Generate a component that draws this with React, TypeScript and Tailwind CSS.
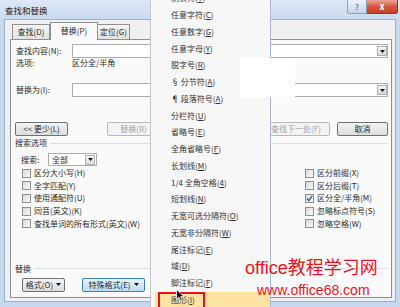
import React from "react";

function Tri() {
  return (
    <svg width="5" height="3" viewBox="0 0 5 3" className="shrink-0">
      <path d="M0 0h5L2.5 3z" fill="#111" />
    </svg>
  );
}

function Combo() {
  return (
    <div className="flex-1 h-[14px] bg-white border border-[#abadb3] flex items-center justify-end">
      <div className="w-[10px] h-[10px] border border-[#b0b0b0] bg-gradient-to-b from-[#f6f6f6] to-[#dadada] flex items-center justify-center">
        <Tri />
      </div>
    </div>
  );
}

function Btn({ label, w, disabled, ml }: { label: string; w: string; disabled?: boolean; ml?: string }) {
  return (
    <div
      className={`${w} ${ml ?? ""} h-[14px] rounded-[2px] border flex items-center justify-center whitespace-nowrap ${
        disabled
          ? "border-[#b5b9bc] bg-[#f4f4f4] text-[#a3a3a3]"
          : "border-[#707070] bg-gradient-to-b from-[#f4f4f4] to-[#dcdcdc] text-[#222]"
      }`}
    >
      {label}
    </div>
  );
}

function Check({ label, checked }: { label: string; checked?: boolean }) {
  return (
    <div className="h-[12.6px] flex items-center gap-[3px] whitespace-nowrap">
      <span className="w-[9px] h-[9px] border border-[#8e8f8f] bg-gradient-to-br from-[#d9d9d9] to-[#fbfbfb] flex items-center justify-center shrink-0">
        {checked && (
          <svg width="7" height="7" viewBox="0 0 7 7">
            <path d="M1 3.6 L2.9 5.6 L6.2 0.9" stroke="#2d5ea8" strokeWidth="1.4" fill="none" />
          </svg>
        )}
      </span>
      <span>{label}</span>
    </div>
  );
}

function Header({ label, mt }: { label: string; mt: string }) {
  return (
    <div className={`${mt} h-[10px] flex items-center pl-[4px] pr-[3px]`}>
      <span className="whitespace-nowrap">{label}</span>
      <div className="flex-1 ml-[3px] h-px bg-[#d5dfe5]" />
    </div>
  );
}

const menuItems: [string, string, string][] = [
  ["制表符(", "T", ")"],
  ["任意字符(", "C", ")"],
  ["任意数字(", "G", ")"],
  ["任意字母(", "Y", ")"],
  ["脱字号(", "R", ")"],
  ["§ 分节符(", "A", ")"],
  ["¶ 段落符号(", "A", ")"],
  ["分栏符(", "U", ")"],
  ["省略号(", "E", ")"],
  ["全角省略号(", "F", ")"],
  ["长划线(", "M", ")"],
  ["1/4 全角空格(", "4", ")"],
  ["短划线(", "N", ")"],
  ["无宽可选分隔符(", "O", ")"],
  ["无宽非分隔符(", "W", ")"],
  ["尾注标记(", "E", ")"],
  ["域(", "D", ")"],
  ["脚注标记(", "F", ")"],
  ["图形(", "I", ")"],
];

export default function App() {
  return (
    <div className="relative w-[400px] h-[307px] overflow-hidden bg-[#c6d8ee] font-['Noto_Sans_CJK_SC','Noto_Sans',sans-serif] text-[8px] leading-[10px] text-[#2a2a2a] flex flex-col">
      {/* title bar */}
      <div className="h-[19px] shrink-0 flex items-start bg-gradient-to-b from-[#dde8f6] to-[#c9dbf0]">
        <span className="ml-[5px] mt-[5px] text-[8.5px] text-[#1a1a1a]">查找和替换</span>
        <div className="ml-auto mr-[2px] flex">
          <div className="w-[20px] h-[14px] border border-[#8aa0bb] border-t-0 rounded-bl-[3px] bg-gradient-to-b from-[#eef3f9] to-[#c7d5e7] flex items-center justify-center text-[8px] text-[#3a4d66]">
            ?
          </div>
          <div className="w-[31px] h-[14px] border border-[#8a3a2c] border-t-0 border-l-0 rounded-br-[3px] bg-gradient-to-b from-[#eaa594] via-[#d7553f] to-[#c53f29] flex items-center justify-center text-white text-[9px] font-bold">
            x
          </div>
        </div>
      </div>

      {/* body */}
      <div className="flex-1 mx-[4px] mb-[5px] bg-[#f0f0f0] border border-[#9db2ca] flex flex-col">
        {/* tabs */}
        <div className="mt-[2px] ml-[7px] h-[17px] flex items-end">
          <div className="w-[38px] h-[15px] border border-[#8e8f8f] border-b-0 bg-gradient-to-b from-[#f5f5f5] to-[#e2e2e2] flex items-center justify-center">
            查找(D)
          </div>
          <div className="relative z-10 -mb-px w-[48px] h-[18px] border border-[#8e8f8f] border-b-0 bg-[#fafafa] flex items-center justify-center pb-[2px]">
            替换(P)
          </div>
          <div className="w-[32px] h-[15px] border border-[#8e8f8f] border-b-0 border-l-0 bg-gradient-to-b from-[#f5f5f5] to-[#e2e2e2] flex items-center justify-center">
            定位(G)
          </div>
        </div>

        {/* panel */}
        <div className="ml-[5px] mr-[3px] mb-[3px] flex-1 border border-[#8e8f8f] bg-[#fafafa] flex flex-col">
          <div className="mt-[4px] h-[14px] flex items-center pr-[3px]">
            <span className="w-[61px] pl-[5px] shrink-0 whitespace-nowrap">查找内容(N):</span>
            <Combo />
          </div>
          <div className="h-[10px] flex items-center">
            <span className="w-[61px] pl-[5px] shrink-0">选项:</span>
            <span>区分全/半角</span>
          </div>
          <div className="mt-[15px] h-[14px] flex items-center pr-[3px]">
            <span className="w-[61px] pl-[5px] shrink-0 whitespace-nowrap">替换为(I):</span>
            <Combo />
          </div>

          <div className="mt-[25px] h-[14px] flex items-center pl-[4px] pr-[3px]">
            <Btn label="<< 更少(L)" w="w-[53px]" />
            <Btn label="替换(R)" w="w-[53px]" ml="ml-[39px]" disabled />
            <div className="ml-auto flex">
              <Btn label="查找下一处(F)" w="w-[68px]" disabled />
              <Btn label="取消" w="w-[51px]" ml="ml-[7px]" />
            </div>
          </div>

          <Header label="搜索选项" mt="mt-[2px]" />

          <div className="mt-[5px] h-[13px] flex items-center pl-[10px]">
            <span className="w-[27px] shrink-0">搜索:</span>
            <div className="w-[49px] h-[13px] bg-white border border-[#abadb3] flex items-center justify-between pl-[3px]">
              <span>全部</span>
              <div className="w-[10px] h-[10px] mr-px border border-[#b0b0b0] bg-gradient-to-b from-[#f6f6f6] to-[#dadada] flex items-center justify-center">
                <Tri />
              </div>
            </div>
          </div>

          <div className="mt-[1px] flex">
            <div className="pl-[11px] flex flex-col">
              <Check label="区分大小写(H)" />
              <Check label="全字匹配(Y)" />
              <Check label="使用通配符(U)" />
              <Check label="同音(英文)(K)" />
              <Check label="查找单词的所有形式(英文)(W)" />
            </div>
            <div className="ml-auto w-[86px] flex flex-col">
              <Check label="区分前缀(X)" />
              <Check label="区分后缀(T)" />
              <Check label="区分全/半角(M)" checked />
              <Check label="忽略标点符号(S)" />
              <Check label="忽略空格(W)" />
            </div>
          </div>

          <Header label="替换" mt="mt-[34px]" />

          <div className="mt-[4px] h-[14px] flex items-center pl-[11px]">
            <div className="w-[43px] h-[14px] rounded-[2px] border border-[#707070] bg-gradient-to-b from-[#f4f4f4] to-[#dcdcdc] flex items-center justify-center gap-[3px]">
              <span>格式(O)</span>
              <Tri />
            </div>
            <div className="ml-[17px] w-[63px] h-[14px] rounded-[2px] border border-[#3c7fb1] bg-gradient-to-b from-[#e8f5fd] to-[#b9ddf5] flex items-center justify-center gap-[3px]">
              <span>特殊格式(E)</span>
              <Tri />
            </div>
          </div>
        </div>
      </div>

      {/* special menu */}
      <div className="absolute left-[150px] top-0 w-[121px] h-[307px] bg-[#f7f7f7] border-l border-l-[#c6c6c6] border-r border-r-[#a3bcd8] overflow-hidden">
        <div className="mt-[-10px] flex flex-col">
          {menuItems.map(([a, k, b], i) => {
            const hot = i === menuItems.length - 1;
            return (
              <div key={i} className="relative h-[16.76px] flex items-center pl-[20px] text-[#333] whitespace-nowrap">
                {hot && (
                  <>
                    <div className="absolute left-[4px] right-0 top-0 bottom-0 bg-[#fde3a3]" />
                    <div className="absolute left-[7px] w-[47px] top-[0.5px] bottom-[-3px] border-2 border-[#e3131b]" />
                  </>
                )}
                <span className="relative">
                  {a}
                  <span className="underline">{k}</span>
                  {b}
                </span>
              </div>
            );
          })}
        </div>
      </div>

      {/* torn white patch */}
      <div className="absolute left-[240px] top-[58px] w-[55px] h-[39px] bg-white" />

      {/* cursor */}
      <svg className="absolute left-[176px] top-[289px]" width="9" height="13" viewBox="0 0 9 13">
        <path d="M0.5 0.5 L0.5 10.5 L3 8.2 L4.8 12 L6.4 11.3 L4.7 7.6 L8 7.6 Z" fill="#111" stroke="#fff" strokeWidth="0.8" />
      </svg>

      {/* watermark */}
      <div className="absolute left-[245px] top-[259px] text-[18px] leading-[18px] text-[#e8141b] font-['Liberation_Sans','Noto_Sans_CJK_SC',sans-serif] whitespace-nowrap">
        office教程学习网
      </div>
      <div className="absolute left-[257px] top-[283px] text-[14px] leading-[14px] text-[#e8141b] font-['Liberation_Sans',sans-serif] whitespace-nowrap">
        www.office68.com
      </div>
    </div>
  );
}
